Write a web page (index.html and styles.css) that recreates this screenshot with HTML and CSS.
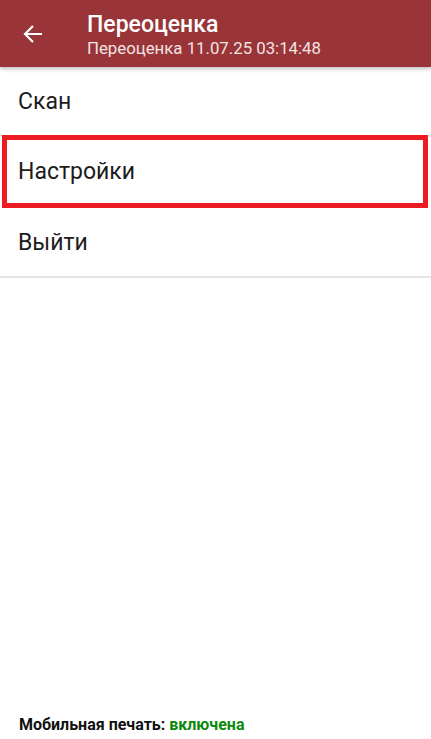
FILE: index.html
```html
<!DOCTYPE html>
<html lang="ru">
<head>
    <meta charset="UTF-8">
    <meta name="viewport" content="width=device-width, initial-scale=1.0">
    <title>Переоценка</title>
    <link rel="stylesheet" href="styles.css">
</head>
<body>
    <div class="screen">
        <header class="toolbar">
            <button class="back-btn" aria-label="Назад">
                <svg width="22" height="22" viewBox="0 0 22 22">
                    <path d="M20 11H3M11 3L3 11L11 19" fill="none" stroke="#fff" stroke-width="2.2"/>
                </svg>
            </button>
            <div class="toolbar-titles">
                <div class="toolbar-title">Переоценка</div>
                <div class="toolbar-subtitle">Переоценка 11.07.25 03:14:48</div>
            </div>
        </header>

        <ul class="menu">
            <li class="menu-item">Скан</li>
            <li class="menu-item highlighted">Настройки</li>
            <li class="menu-item">Выйти</li>
        </ul>

        <footer class="status">
            Мобильная печать: <span class="status-on">включена</span>
        </footer>
    </div>
</body>
</html>
```

FILE: styles.css
```css
* {
    box-sizing: border-box;
    margin: 0;
    padding: 0;
}

body {
    background-color: #fff;
    font-family: Roboto, 'Noto Sans', sans-serif;
    color: #1c1c1c;
}

.screen {
    display: flex;
    flex-direction: column;
    height: 739px;
}

.toolbar {
    display: flex;
    align-items: center;
    height: 67px;
    background-color: #993538;
    box-shadow: 0 2px 4px rgba(0, 0, 0, 0.25);
    position: relative;
    z-index: 1;
}

.back-btn {
    width: 66px;
    height: 67px;
    display: flex;
    align-items: center;
    justify-content: center;
    background: none;
    border: none;
    padding-left: 0;
}

.toolbar-titles {
    margin-left: 21px;
    padding-top: 3px;
}

.toolbar-title {
    color: #fff;
    font-size: 23px;
    font-weight: 500;
    line-height: 27px;
}

.toolbar-subtitle {
    color: #f2e3e3;
    font-size: 16.8px;
    line-height: 21px;
}

.menu {
    list-style-type: none;
}

.menu-item {
    height: 70px;
    display: flex;
    align-items: center;
    padding-left: 18px;
    font-size: 23px;
    border-bottom: 2px solid #e6e6e6;
}

.menu-item.highlighted {
    border: 5px solid #ed1c24;
    margin: -2px 3px 0 2px;
    height: 73px;
    padding-left: 11px;
}

.status {
    margin-top: auto;
    padding-left: 19px;
    height: 24px;
    font-size: 16px;
    font-weight: bold;
    color: #111;
}

.status-on {
    color: #0a8a0a;
}
```
